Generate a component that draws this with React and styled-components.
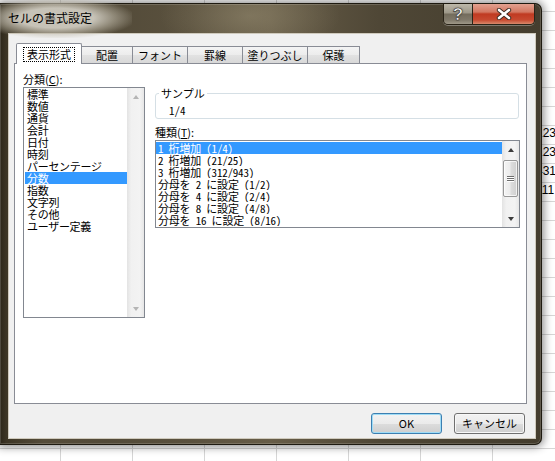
import React from "react";
import styled, { createGlobalStyle, css } from "styled-components";

const GlobalStyle = createGlobalStyle`
  html, body { margin: 0; padding: 0; }
  body {
    width: 555px; height: 461px; overflow: hidden;
    font-family: "Noto Sans CJK JP", "Liberation Sans", sans-serif;
  }
  #root { width: 555px; height: 461px; }
`;

const JP = `"Noto Sans CJK JP", "Liberation Sans", sans-serif`;
const MONO = `"Noto Sans Mono CJK JP", "Noto Sans CJK JP", "Liberation Sans", sans-serif`;

/* ---------- spreadsheet behind ---------- */
const Sheet = styled.div`
  position: relative;
  width: 555px;
  height: 461px;
  overflow: hidden;
  background-color: #ffffff;
  background-image:
    linear-gradient(90deg, #d6d6d6 1px, transparent 1px),
    linear-gradient(180deg, #d6d6d6 1px, transparent 1px);
  background-size: 72px 100%, 100% 19px;
  background-position: 60px 0, 0 11px;
`;

const NumCol = styled.div`
  display: flex;
  flex-direction: column;
  padding: 124px 0 0 536px;
  font: 12px "Liberation Sans", sans-serif;
  color: #000;
`;

const Num = styled.div`
  height: 19px;
  line-height: 19px;
`;

/* ---------- dialog frame ---------- */
const Dialog = styled.div`
  position: absolute;
  left: 0;
  top: 3px;
  width: 542px;
  height: 442px;
  box-sizing: border-box;
  border: 1px solid #1e1a10;
  border-left: none;
  border-radius: 0 7px 7px 0;
  background:
    radial-gradient(ellipse 90px 40px at 250px 12px, rgba(160, 150, 122, 0.45), transparent),
    linear-gradient(90deg, #2e281b 0%, #3d3626 1.2%, #554c3a 8%, #62594536 20%, #5a513e 35%, #675d48 50%, #4f4736 70%, #443d2e 100%);
  background-color: #4f4736;
  box-shadow: 0 0 9px 2px rgba(0, 0, 0, 0.45), inset 0 0 0 1px rgba(255, 255, 255, 0.16);
  display: flex;
  flex-direction: column;
`;

const TitleBar = styled.div`
  height: 29px;
  display: flex;
  align-items: flex-start;
  position: relative;
  z-index: 0;
`;

const Title = styled.div`
  position: relative;
  margin: 6px 0 0 8px;
  font: 12px/16px ${JP};
  color: #000;
  z-index: 0;
  &::before {
    content: "";
    position: absolute;
    inset: -12px -40px -12px -14px;
    background: radial-gradient(ellipse at 45% 50%, rgba(205, 201, 190, 0.95) 35%, rgba(190, 184, 168, 0.55) 55%, rgba(160, 152, 132, 0) 75%);
    z-index: -1;
  }
`;

const Caption = styled.div`
  margin-left: auto;
  margin-right: 6px;
  display: flex;
  height: 20px;
  border: 1px solid #2a2418;
  border-top: none;
  border-radius: 0 0 5px 5px;
  overflow: hidden;
  box-shadow: 0 1px 0 rgba(255, 255, 255, 0.3);
`;

const CapBtn = styled.div`
  width: ${(p) => p.$w}px;
  height: 20px;
  display: flex;
  align-items: center;
  justify-content: center;
  box-sizing: border-box;
  ${(p) =>
    p.$close
      ? css`
          background: linear-gradient(180deg, #e2a190 0%, #d37862 40%, #c03a21 50%, #c74a30 80%, #d8896b 100%);
        `
      : css`
          border-right: 1px solid #2a2418;
          background: linear-gradient(180deg, #bdb8aa 0%, #9d9788 45%, #736c5c 50%, #80796a 80%, #9f9888 100%);
        `}
`;

const Help = styled.span`
  font: bold 17px/17px "Liberation Sans", sans-serif;
  color: #fff;
  -webkit-text-stroke: 0.6px #3a3a3a;
  text-shadow: 0 0 2px rgba(0, 0, 0, 0.6);
`;

/* ---------- client area ---------- */
const Client = styled.div`
  flex: 1;
  margin: 0 5px 5px 8px;
  box-sizing: border-box;
  border: 1px solid #cfcabd;
  background: #f0f0f0;
  padding: 9px 8px 0 5px;
  display: flex;
  flex-direction: column;
`;

const TabStrip = styled.div`
  position: relative;
  z-index: 1;
  display: flex;
  align-items: flex-end;
  height: 20px;
  padding-left: 2px;
`;

const Tab = styled.div`
  box-sizing: border-box;
  width: ${(p) => p.$w}px;
  margin-left: ${(p) => (p.$first ? 0 : -1)}px;
  border: 1px solid #898c95;
  border-bottom: none;
  display: flex;
  align-items: center;
  justify-content: center;
  font: 11px/13px ${JP};
  color: #000;
  ${(p) =>
    p.$active
      ? css`
          height: 21px;
          margin-bottom: -1px;
          background: #fff;
          border-radius: 2px 2px 0 0;
        `
      : css`
          height: 17px;
          padding-top: 1px;
          background: linear-gradient(180deg, #f4f4f4 0%, #ececec 50%, #e2e2e2 51%, #d8d8d8 100%);
        `}
`;

const FocusRect = styled.span`
  border: 1px dotted #000;
  padding: 0 3px;
  line-height: 13px;
`;

const Panel = styled.div`
  box-sizing: border-box;
  height: 341px;
  border: 1px solid #898c95;
  background: #fff;
  display: flex;
  gap: 10px;
  padding: 8px 0 0 8px;
`;

const Column = styled.div`
  display: flex;
  flex-direction: column;
  width: ${(p) => p.$w}px;
`;

const Label = styled.div`
  height: 15px;
  font: 11px/14px ${JP};
  color: #000;
  margin-top: ${(p) => p.$mt || 0}px;
  u { text-decoration: underline; }
`;

const ListBox = styled.div`
  box-sizing: border-box;
  width: ${(p) => p.$w}px;
  height: ${(p) => p.$h}px;
  border: 1px solid #828790;
  background: #fff;
  display: flex;
`;

const Items = styled.div`
  flex: 1;
  padding-top: ${(p) => p.$pt || 0}px;
  display: flex;
  flex-direction: column;
`;

const Item = styled.div`
  height: 12px;
  font: 11px/12px ${(p) => (p.$mono ? MONO : JP)};
  letter-spacing: ${(p) => (p.$mono ? "-0.2px" : "-0.3px")};
  padding-left: 2px;
  white-space: nowrap;
  overflow: hidden;
  color: ${(p) => (p.$sel ? "#fff" : "#000")};
  background: ${(p) => (p.$sel ? "#3399ff" : "transparent")};
  margin-left: ${(p) => (p.$inset ? 1 : 0)}px;
`;

const ScrollBar = styled.div`
  width: 17px;
  display: flex;
  flex-direction: column;
  background: linear-gradient(90deg, #e3e3e3 0%, #f1f1f1 25%, #f3f3f3 75%, #e6e6e6 100%);
`;

const ArrowBtn = styled.div`
  height: 17px;
  display: flex;
  align-items: center;
  justify-content: center;
  &::after {
    content: "";
    width: 0;
    height: 0;
    border-left: 3.5px solid transparent;
    border-right: 3.5px solid transparent;
    ${(p) =>
      p.$down
        ? css`border-top: 4px solid ${p.$off ? "#b5b5b5" : "#3c3c3c"};`
        : css`border-bottom: 4px solid ${p.$off ? "#b5b5b5" : "#3c3c3c"};`}
  }
`;

const Track = styled.div`
  flex: 1;
  display: flex;
  flex-direction: column;
  padding: 2px 1px 0;
`;

const Thumb = styled.div`
  height: 37px;
  box-sizing: border-box;
  border: 1px solid #979797;
  border-radius: 2px;
  background: linear-gradient(90deg, #f4f4f4 0%, #ececec 45%, #dcdcdc 55%, #cfcfcf 100%);
  box-shadow: inset 0 0 0 1px rgba(255, 255, 255, 0.7);
  display: flex;
  flex-direction: column;
  align-items: center;
  justify-content: center;
  gap: 1px;
`;

const Grip = styled.div`
  width: 7px;
  height: 1px;
  background: #6d6d6d;
  box-shadow: 0 1px 0 #fff;
`;

const GroupBox = styled.div`
  position: relative;
  box-sizing: border-box;
  margin-top: 21px;
  height: 26px;
  width: 364px;
  border: 1px solid #d5dfe5;
  border-radius: 3px;
  padding: 10px 0 0 13px;
  font: 11px/12px ${MONO};
  color: #000;
`;

const Legend = styled.span`
  position: absolute;
  top: -7px;
  left: 3px;
  padding: 0 2px;
  background: #fff;
  font: 11px/13px ${JP};
`;

const Footer = styled.div`
  display: flex;
  justify-content: flex-end;
  gap: 12px;
  padding: 9px 2px 0 0;
`;

const Button = styled.div`
  box-sizing: border-box;
  width: 71px;
  height: 21px;
  border-radius: 3px;
  display: flex;
  align-items: center;
  justify-content: center;
  font: 11px/13px ${JP};
  color: #000;
  background: linear-gradient(180deg, #f2f2f2 0%, #ebebeb 50%, #dddddd 51%, #cfcfcf 100%);
  border: 1px solid ${(p) => (p.$default ? "#3c7fb1" : "#707070")};
  box-shadow: inset 0 0 0 1px ${(p) => (p.$default ? "#9fdcf6" : "#f8f8f8")};
`;

const categories = [
  "標準", "数値", "通貨", "会計", "日付", "時刻", "パーセンテージ",
  "分数", "指数", "文字列", "その他", "ユーザー定義",
];

const types = [
  "1 桁増加 (1/4)",
  "2 桁増加 (21/25)",
  "3 桁増加 (312/943)",
  "分母を 2 に設定 (1/2)",
  "分母を 4 に設定 (2/4)",
  "分母を 8 に設定 (4/8)",
  "分母を 16 に設定 (8/16)",
];

const tabs = [
  { t: "表示形式", w: 66, active: true },
  { t: "配置", w: 52 },
  { t: "フォント", w: 56 },
  { t: "罫線", w: 56 },
  { t: "塗りつぶし", w: 66 },
  { t: "保護", w: 53 },
];

function CloseGlyph() {
  return (
    <svg width="16" height="12" viewBox="0 0 16 12">
      <path d="M3 2 L13 10 M13 2 L3 10" stroke="#3a2a20" strokeWidth="4.4" strokeLinecap="round" fill="none" />
      <path d="M3 2 L13 10 M13 2 L3 10" stroke="#fff" strokeWidth="2.6" strokeLinecap="round" fill="none" />
    </svg>
  );
}

export default function App() {
  return (
    <>
      <GlobalStyle />
      <Sheet>
        <NumCol>
          <Num>123</Num>
          <Num>123</Num>
          <Num>431</Num>
          <Num>111</Num>
        </NumCol>
        <Dialog>
          <TitleBar>
            <Title>セルの書式設定</Title>
            <Caption>
              <CapBtn $w={29}>
                <Help>?</Help>
              </CapBtn>
              <CapBtn $w={61} $close>
                <CloseGlyph />
              </CapBtn>
            </Caption>
          </TitleBar>
          <Client>
            <TabStrip>
              {tabs.map((tb, i) => (
                <Tab key={tb.t} $w={tb.w} $active={tb.active} $first={i === 0}>
                  {tb.active ? <FocusRect>{tb.t}</FocusRect> : tb.t}
                </Tab>
              ))}
            </TabStrip>
            <Panel>
              <Column $w={122}>
                <Label>分類(<u>C</u>):</Label>
                <ListBox $w={122} $h={231}>
                  <Items>
                    {categories.map((c, i) => (
                      <Item key={c} $sel={i === 7} $inset>{c}</Item>
                    ))}
                  </Items>
                  <ScrollBar>
                    <ArrowBtn $off />
                    <Track />
                    <ArrowBtn $down $off />
                  </ScrollBar>
                </ListBox>
              </Column>
              <Column $w={365}>
                <GroupBox>
                  <Legend>サンプル</Legend>
                  1/4
                </GroupBox>
                <Label $mt={6}>種類(<u>T</u>):</Label>
                <ListBox $w={365} $h={88}>
                  <Items $pt={1}>
                    {types.map((t, i) => (
                      <Item key={t} $sel={i === 0} $mono>{t}</Item>
                    ))}
                  </Items>
                  <ScrollBar>
                    <ArrowBtn />
                    <Track>
                      <Thumb>
                        <Grip />
                        <Grip />
                        <Grip />
                      </Thumb>
                    </Track>
                    <ArrowBtn $down />
                  </ScrollBar>
                </ListBox>
              </Column>
            </Panel>
            <Footer>
              <Button $default>OK</Button>
              <Button>キャンセル</Button>
            </Footer>
          </Client>
        </Dialog>
      </Sheet>
    </>
  );
}
